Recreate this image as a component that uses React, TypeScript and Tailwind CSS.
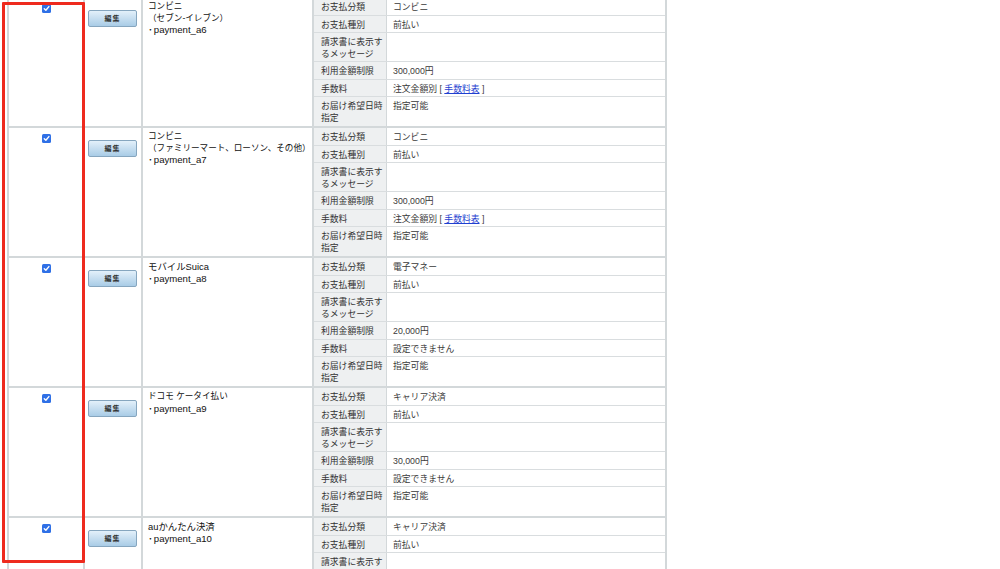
import React from "react";

type Block = {
  name: string[];
  values: React.ReactNode[];
};

const fee = (
  <span>
    注文金額別 [{" "}
    <a href="#" className="text-[#1f3fd0] underline">
      手数料表
    </a>{" "}
    ]
  </span>
);

const blocks: Block[] = [
  {
    name: ["コンビニ", "（セブン-イレブン）", "payment_a6"],
    values: ["コンビニ", "前払い", "", "300,000円", fee, "指定可能"],
  },
  {
    name: ["コンビニ", "（ファミリーマート、ローソン、その他）", "payment_a7"],
    values: ["コンビニ", "前払い", "", "300,000円", fee, "指定可能"],
  },
  {
    name: ["モバイルSuica", "payment_a8"],
    values: ["電子マネー", "前払い", "", "20,000円", "設定できません", "指定可能"],
  },
  {
    name: ["ドコモ ケータイ払い", "payment_a9"],
    values: ["キャリア決済", "前払い", "", "30,000円", "設定できません", "指定可能"],
  },
  {
    name: ["auかんたん決済", "payment_a10"],
    values: ["キャリア決済", "前払い", "", "", "", ""],
  },
];

const labels: React.ReactNode[] = [
  "お支払分類",
  "お支払種別",
  <>
    請求書に表示す
    <br />
    るメッセージ
  </>,
  "利用金額制限",
  "手数料",
  <>
    お届け希望日時
    <br />
    指定
  </>,
];

const heights = ["h-[18px]", "h-[17px]", "h-[29px]", "h-[18px]", "h-[17px]", "h-[29px]"];

function Check() {
  return (
    <span className="inline-flex w-[9px] h-[9px] rounded-[1.5px] bg-[#2f70e6] items-center justify-center">
      <svg width="7" height="7" viewBox="0 0 10 10">
        <path d="M1.8 5.2 L4.1 7.5 L8.4 2.3" fill="none" stroke="#ffffff" strokeWidth="2" strokeLinecap="round" strokeLinejoin="round" />
      </svg>
    </span>
  );
}

function Row({ b }: { b: Block }) {
  const last = b.name.length - 1;
  return (
    <div className="flex h-[130px] border-b-2 border-[#d3d8da]">
      <div className="w-[78px] shrink-0 border-l-2 border-r-2 border-[#d3d8da] flex justify-center pt-[6px]">
        <Check />
      </div>
      <div className="w-[58px] shrink-0 border-r-2 border-[#d3d8da] pl-[3px] pt-[6px]">
        <button className="w-[49px] h-[17px] rounded-[2px] border border-[#86a6bf] bg-gradient-to-b from-[#e3f0fa] to-[#a9cce6] text-[7px] font-bold text-[#333] leading-none tracking-[1px]">
          編集
        </button>
      </div>
      <div className="w-[171px] shrink-0 border-r-2 border-[#d3d8da] pl-[5px] pt-[3px] text-[8.6px] leading-[11.7px] text-[#111] whitespace-nowrap">
        {b.name.map((n, i) =>
          i === last ? (
            <div key={i} className="text-[9.6px]">
              <span className="mr-[1px]">･</span>
              {n}
            </div>
          ) : (
            <div key={i} className={/[A-Za-z]/.test(n) ? "text-[9.4px]" : ""}>
              {n}
            </div>
          )
        )}
      </div>
      <div className="w-[353px] shrink-0 border-r-2 border-[#d3d8da] overflow-hidden">
        {labels.map((l, i) => (
          <div
            key={i}
            className={`flex ${heights[i]} ${i < 5 ? "border-b border-[#d9dddf]" : ""} text-[8.8px] leading-[11.7px] text-[#333]`}
          >
            <div className="w-[73px] shrink-0 bg-[#eef0f1] border-r border-[#d3d8da] pl-[7px] pt-[4px] whitespace-nowrap">{l}</div>
            <div className="flex-1 pl-[6px] pt-[4px] text-[#3a3a3a]">{b.values[i]}</div>
          </div>
        ))}
      </div>
    </div>
  );
}

export default function App() {
  return (
    <div
      className="relative w-[1000px] h-[569px] overflow-hidden bg-white"
      style={{ fontFamily: '"Liberation Sans", "Noto Sans CJK JP", sans-serif' }}
    >
      <div className="ml-[7px] mt-[-2px] w-[660px]">
        {blocks.map((b, i) => (
          <Row key={i} b={b} />
        ))}
      </div>
      <div className="absolute left-[2px] top-[2px] w-[83px] h-[561px] border-[3px] border-[#ee2a1e] rounded-[1px]" />
    </div>
  );
}
